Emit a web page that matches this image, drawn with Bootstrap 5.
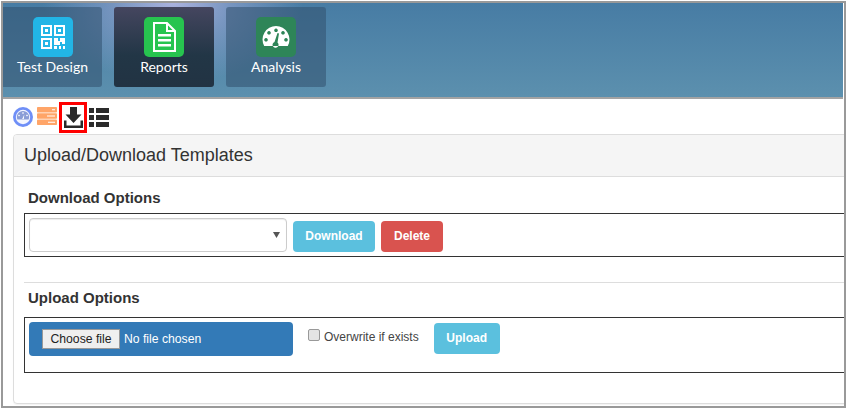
<!DOCTYPE html>
<html lang="en"><head><meta charset="utf-8"><title>Upload/Download Templates</title>
<link href="https://cdn.jsdelivr.net/npm/bootstrap@5.3.0/dist/css/bootstrap.min.css" rel="stylesheet">
<style>
html,body{height:408px;overflow:hidden;background:#fff}
body{font-family:"Liberation Sans",Arial,sans-serif;color:#333;font-size:12px}
.frame{height:407px;margin-top:1px;margin-left:1px;border:2px solid #999;width:845px;overflow:hidden;padding-right:1px}
.hero{height:94px;padding:4px 0 0 0;gap:12px;background:radial-gradient(ellipse 130px 80px at 170px 0,#aab2de 0,rgba(150,165,210,.6) 45%,rgba(90,140,175,0) 100%),linear-gradient(#477ca4,#5c90ae)}
.heroline{height:2px;background:#a3a3a3}
.tile{width:100px;height:80px;border-radius:3px;background:rgba(50,80,110,.55);color:#fff;font:14px/20px Lato,sans-serif;padding-top:10px}
.tile:first-child{width:99px;border-radius:0 3px 3px 0}
.tile.on{background:linear-gradient(#45465f,#223646 60%,#223343)}
.ico{width:40px;height:40px;border-radius:5px;margin-bottom:0}
.i1{background:#22b5e6}.i2{background:#27c44f}.i3{background:#2e8558}
.tools{height:35px;padding:3px 0 0 10px}
.tool-ic{margin-top:5px;flex:none}
.t2{margin-left:4px}.t4{margin-left:2px}
.sel{border:3px solid #f00;width:28px;height:31px;margin-left:2px}
.panel{margin-left:10px;margin-right:-8px;border:1px solid #ddd;border-radius:4px;height:270px;box-shadow:0 1px 1px rgba(0,0,0,.05)}
.phead{height:42px;background:#f5f5f5;border-bottom:1px solid #ddd;font-size:18px;line-height:40px;padding-left:10px;border-radius:3px 3px 0 0;color:#333}
.pbody{padding:0 0 0 10px}
.lbl{font-size:15px;font-weight:700;line-height:20px;margin:0}
.lbl1{padding:11px 0 0 4px;height:36px}
.box{border:1px solid #333;padding:4px;gap:6px;border-right:0}
.box1{height:44px}
.box2{height:56px;gap:15px}
.pick{width:258px;height:34px;border:1px solid #ccc;border-radius:4px;background-color:#fff;padding:0;box-shadow:inset 0 1px 1px rgba(0,0,0,.075);background-position:right 6px center;background-size:7px 6px;background-image:url("data:image/svg+xml,%3Csvg xmlns='http://www.w3.org/2000/svg' viewBox='0 0 7 6'%3E%3Cpath fill='%23555' d='M0 0h7L3.5 6z'/%3E%3C/svg%3E")}
.act{font-size:12px;font-weight:700;color:#fff;border:1px solid transparent;height:31px;border-radius:4px;padding:0 12px;line-height:29px;margin-top:3px}
.b-i{background:#5bc0de}.b-d{background:#d9534f}
.w82{width:82px}.w62{width:62px}.w66{width:66px}
.rule{border:0;border-top:1px solid #ddd;margin:25px 0 5px;opacity:1}
.lbl2{padding-left:4px;height:29px;line-height:20px}
.filewrap{width:264px;height:34px;background:#337ab7;border-radius:4px;padding:7px 0 0 13px;color:#fff;font-size:12.2px;line-height:20px;gap:4px;margin:0}
.fbtn{width:78px;height:20px;border:1px solid #999;background:#efefef;color:#222;text-align:center;line-height:18px;cursor:default}
.chk{margin:7px 0 0 0;gap:4px;color:#444;line-height:17px}
.chk input.form-check-input{width:12px;height:12px;margin:0;border:1px solid #999;border-radius:2px;background-color:#e4e4e4;flex:none}
.act.up{margin:1px 0 0 0}
</style></head>
<body>
<div class="frame">
<div class="hero d-flex">
<div class="tile text-center">
<div class="ico i1 mx-auto d-flex align-items-center justify-content-center"><svg width="24" height="24" viewBox="0 0 24 24" fill="none" stroke="#fff" stroke-width="2"><rect x="1" y="1" width="9" height="9"/><rect x="14" y="1" width="9" height="9"/><rect x="1" y="14" width="9" height="9"/><path fill="#fff" stroke="none" d="M4 4h3v3H4zM17 4h3v3h-3zM4 17h3v3H4zM13 13h4v3h2v-3h5v6h-3v-2h-2v3h-6zM13 21h3v3h-3zM18 21h2v3h-2zM22 21h2v3h-2z"/></svg></div>
Test Design</div>
<div class="tile on text-center">
<div class="ico i2 mx-auto d-flex align-items-center justify-content-center"><svg width="24" height="30" viewBox="0 0 24 30"><path fill="none" stroke="#fff" stroke-width="2" d="M2 1h13l8 8v20H2z"/><path fill="#fff" d="M14 1h2v7h7v2h-9zM6 12h13v2.500H6zM6 17h13v2.500H6zM6 22h13v2.500H6z"/></svg></div>
Reports</div>
<div class="tile text-center">
<div class="ico i3 mx-auto d-flex align-items-center justify-content-center"><svg width="28" height="24" viewBox="0 0 28 24"><path fill="#fff" fill-rule="evenodd" d="M14 1a13.500 13.500 0 0 1 11.800 20H2.200A13.500 13.500 0 0 1 14 1zM14 3.500a1.800 1.800 0 1 0 .01 0zM7 6a1.800 1.800 0 1 0 .01 0zM21 6a1.800 1.800 0 1 0 .01 0zM4 13a1.800 1.800 0 1 0 .01 0zM24 13a1.800 1.800 0 1 0 .01 0zM15.500 8l-3 9a3 3 0 1 0 3 .5l1.500-9z"/></svg></div>
Analysis</div>
</div>
<div class="heroline"></div>
<div class="tools d-flex align-items-start">
<svg class="tool-ic" width="20" height="20" viewBox="0 0 20 20"><circle cx="10" cy="10" r="10" fill="#6f8ff7"/><circle cx="10" cy="10" r="7.200" fill="#f4f6fe"/><path fill="#8a9dd6" d="M10 4a6 6 0 0 1 5.600 8.500H4.400A6 6 0 0 1 10 4z"/><path fill="#fff" d="M10 5l1 1-1 1-1-1zM6 7.500l1 1-1 1-1-1zM14 7.500l1 1-1 1-1-1zM11.300 7.500l-.5 4.500h-1.600z"/></svg>
<svg class="tool-ic t2" width="20" height="18" viewBox="0 0 20 18"><g fill="#ffa568"><rect y="0" width="20" height="5.500" rx=".8"/><rect y="6.300" width="20" height="5.500" rx=".8"/><rect y="12.600" width="20" height="5.400" rx=".8"/></g><path fill="#fff" d="M15 2.200h3v1h-3zM10 8.500h8v1h-8zM11 14.800h7v1h-7z"/></svg>
<div class="sel d-flex align-items-center justify-content-center"><svg width="19" height="21" viewBox="0 0 19 21"><path fill="#2a2a2a" d="M6 0h7v7.500H17.500L9.500 16 1.500 7.500H6zM0 13.500h2.500v5h14v-5H19V21H0z"/></svg></div>
<svg class="tool-ic t4" width="20" height="20" viewBox="0 0 20 20"><path fill="#2b2b2b" d="M0 1h5v5H0zM7 1h13v5H7zM0 8h5v5H0zM7 8h13v5H7zM0 15h5v5H0zM7 15h13v5H7z"/></svg>
</div>
<div class="panel">
<div class="phead">Upload/Download Templates</div>
<div class="pbody">
<p class="lbl lbl1">Download Options</p>
<div class="box box1 d-flex">
<select class="form-select pick" aria-label="Template"></select>
<button class="btn act b-i w82 p-0" type="button">Download</button>
<button class="btn act b-d w62 p-0" type="button">Delete</button>
</div>
<hr class="rule">
<p class="lbl lbl2">Upload Options</p>
<div class="box box2 d-flex align-items-start">
<label class="filewrap d-flex"><input type="file" class="d-none"><span class="fbtn">Choose file</span><span>No file chosen</span></label>
<label class="chk d-flex align-items-start"><input type="checkbox" class="form-check-input">Overwrite if exists</label>
<button class="btn act up b-i w66 p-0" type="button">Upload</button>
</div>
</div>
</div>
</div>
</body></html>
